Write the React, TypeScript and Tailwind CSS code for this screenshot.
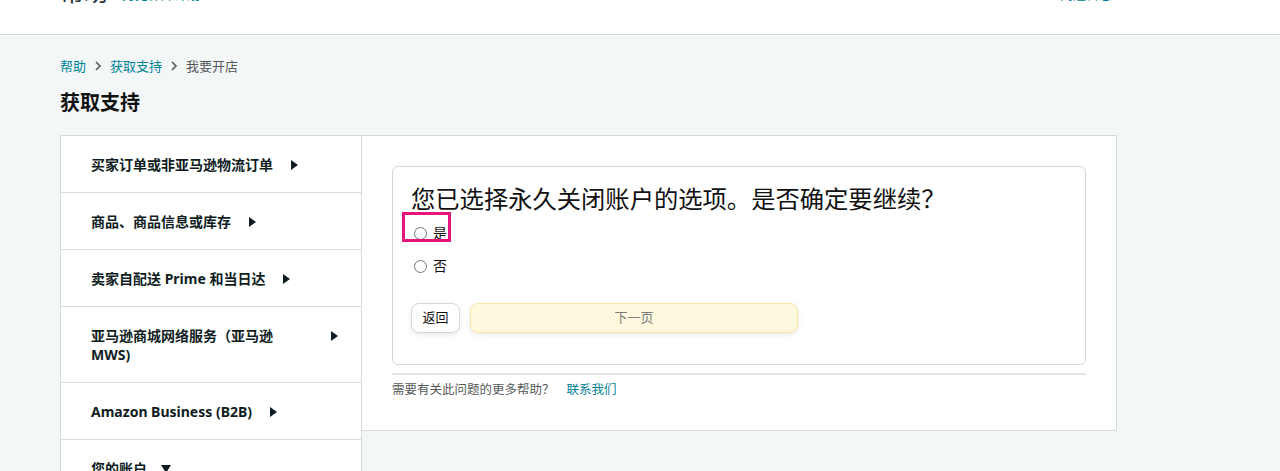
import { useState } from "react";

const FONT = "font-['Noto_Sans','Noto_Sans_CJK_SC',sans-serif]";

interface Topic {
  id: string;
  name: string;
  open?: boolean;
}

const topics: Topic[] = [
  { id: "orders", name: "买家订单或非亚马逊物流订单" },
  { id: "listings", name: "商品、商品信息或库存" },
  { id: "prime", name: "卖家自配送 Prime 和当日达" },
  { id: "mws", name: "亚马逊商城网络服务（亚马逊 MWS)" },
  { id: "b2b", name: "Amazon Business (B2B)" },
  { id: "account", name: "您的账户", open: true },
];

function Arrow({ down }: { down?: boolean }) {
  return down ? (
    <svg width="10" height="8" viewBox="0 0 10 8" className="shrink-0">
      <path d="M0 0h10L5 8z" fill="#0f1d22" />
    </svg>
  ) : (
    <svg width="7" height="10" viewBox="0 0 7 10" className="mt-[5px] shrink-0">
      <path d="M0 0l7 5-7 5z" fill="#0f1d22" />
    </svg>
  );
}

function Chevron() {
  return (
    <svg width="8" height="10" viewBox="0 0 8 10" className="mx-[8px]">
      <path d="M2 1l4 4-4 4" stroke="#55605f" strokeWidth="1.7" fill="none" />
    </svg>
  );
}

export default function App() {
  const [choice, setChoice] = useState("");

  return (
    <div className={`min-h-screen bg-[#f4f7f7] ${FONT} text-[#0f1111]`}>
      <header className="h-[35px] overflow-hidden border-b border-[#d5dbdb] bg-white">
        <div className="-mt-[23px] flex items-end justify-between pl-[60px] pr-[168px]">
          <div className="flex items-end gap-[14px]">
            <span className="text-[24px] leading-[30px] text-[#232f3e]">帮助</span>
            <span className="pb-[4px] text-[13px] leading-[18px] text-[#008296]">另见保障计划</span>
          </div>
          <span className="pb-[4px] text-[13px] leading-[18px] text-[#008296]">问题日志</span>
        </div>
      </header>

      <main className="px-[60px] pt-[22px]">
        <nav className="flex items-center text-[13px] leading-[18px]">
          <a className="text-[#008296]">帮助</a>
          <Chevron />
          <a className="text-[#008296]">获取支持</a>
          <Chevron />
          <span className="text-[#565959]">我要开店</span>
        </nav>

        <h1 className="mt-[14px] text-[20px] font-bold leading-[28px] text-[#0f1111]">获取支持</h1>

        <div className="mt-[18px] flex items-start">
          <ul className="w-[302px] shrink-0 border border-b-0 border-[#d5dbdb] bg-white">
            {topics.map((t) => (
              <li
                key={t.id}
                className="flex items-start border-b border-[#d5dbdb] py-[18.5px] pl-[30px] pr-[20px] text-[14px] font-bold leading-[19px] text-[#0f1d22]"
              >
                <span className="max-w-[222px]">{t.name}</span>
                <span className={t.open ? "ml-[14px] mt-[6px]" : "ml-[18px]"}>
                  <Arrow down={t.open} />
                </span>
              </li>
            ))}
          </ul>

          <section className="h-[296px] w-[755px] border border-l-0 border-[#d5dbdb] bg-white px-[30px] pt-[30px]">
            <div className="rounded-[6px] border border-[#d5d9d9] px-[18px] pb-[31px] pt-[16px]">
              <h2 className="text-[24.3px] leading-[32px] text-[#111111]">
                您已选择永久关闭账户的选项。是否确定要继续？
              </h2>

              <div className="mt-[8px] flex flex-col gap-[13px] text-[14px] leading-[20px] text-[#111111]">
                <label className="relative flex items-center gap-[6px] pl-[3px]">
                  <input
                    type="radio"
                    name="close"
                    checked={choice === "yes"}
                    onChange={() => setChoice("yes")}
                    className="m-0 h-[13px] w-[13px]"
                  />
                  是
                  <span className="pointer-events-none absolute -left-[9px] -top-[11px] h-[30px] w-[49px] border-[3px] border-[#e5157a]" />
                </label>
                <label className="flex items-center gap-[6px] pl-[3px]">
                  <input
                    type="radio"
                    name="close"
                    checked={choice === "no"}
                    onChange={() => setChoice("no")}
                    className="m-0 h-[13px] w-[13px]"
                  />
                  否
                </label>
              </div>

              <div className="mt-[27px] flex gap-[10px]">
                <button
                  type="button"
                  className="h-[30px] w-[49px] rounded-[8px] border border-[#d5d9d9] bg-white text-[13px] text-[#0f1111] shadow-[0_2px_5px_rgba(213,217,217,0.5)]"
                >
                  返回
                </button>
                <button
                  type="button"
                  className="h-[30px] w-[328px] rounded-[8px] border border-[#fce7a1] bg-[#fef8de] text-[13px] text-[#7d7d7d] shadow-[0_2px_5px_rgba(213,217,217,0.5)]"
                >
                  下一页
                </button>
              </div>
            </div>

            <div className="mt-[8px] h-[2px] bg-[#e3e6e6]" />
            <p className="mt-[6px] text-[12.5px] leading-[18px] text-[#565959]">
              需要有关此问题的更多帮助？
              <a className="ml-[12px] text-[#008296]">联系我们</a>
            </p>
          </section>
        </div>
      </main>
    </div>
  );
}
